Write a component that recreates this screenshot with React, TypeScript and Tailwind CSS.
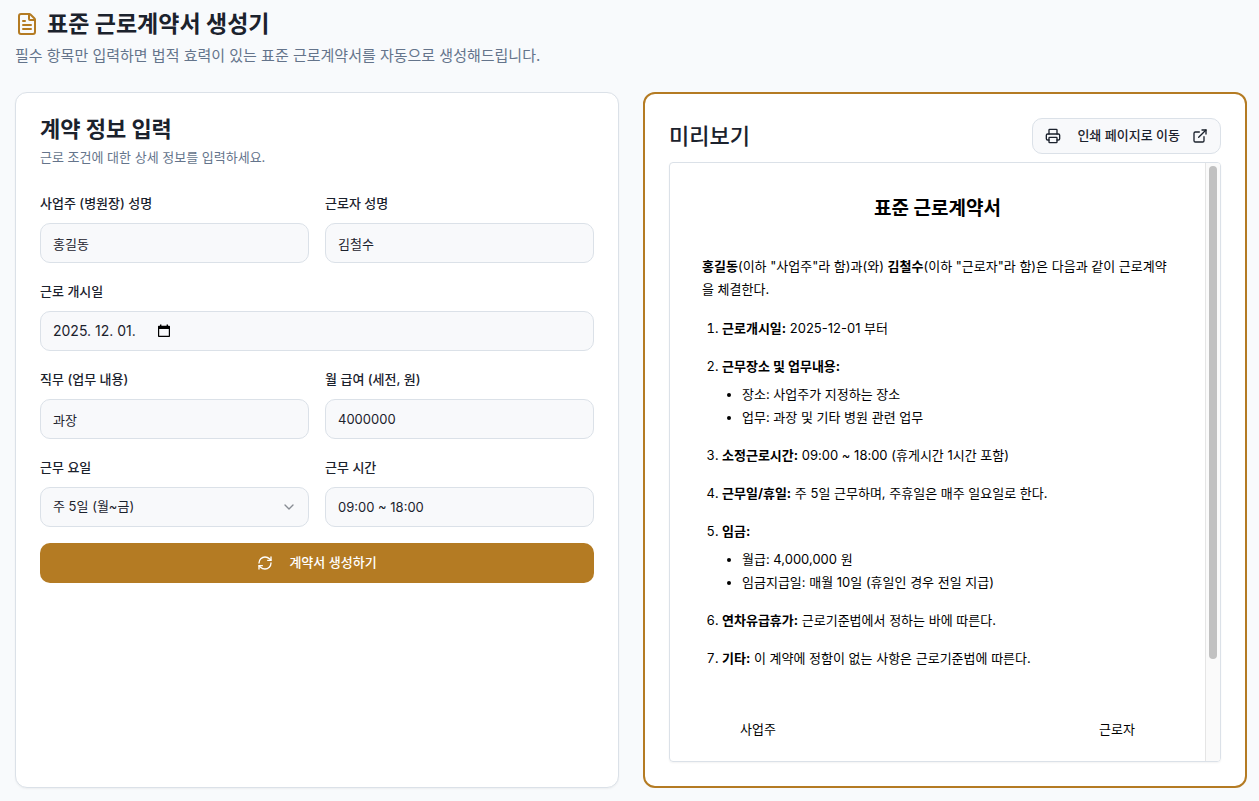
import { useState } from "react"
import type { ReactNode } from "react"
import { ChevronDown, ExternalLink, FileText, Printer, RefreshCw } from "lucide-react"

const inputClass =
    "h-10 w-full rounded-[10px] border border-[#dbe1e8] bg-[#f8f9fb] px-3 text-[#1b222d] outline-none focus:border-[#b47b23]"

const Field = ({ id, label, children }: { id: string; label: string; children: ReactNode }) => (
    <div className="flex flex-col gap-2">
        <label htmlFor={id} className="text-[13px] leading-6 font-medium">{label}</label>
        {children}
    </div>
)

export default function App() {
    const [form, setForm] = useState({
        employer: "홍길동",
        employee: "김철수",
        startDate: "2025. 12. 01.",
        job: "과장",
        salary: "4000000",
        days: "5",
        hours: "09:00 ~ 18:00",
    })

    const update = (key: string, value: string) => setForm({ ...form, [key]: value })

    const isoDate = form.startDate.split(".").map((part) => part.trim()).filter(Boolean).join("-")

    return (
        <div className="min-h-screen bg-[#f8fafc] pt-2 pr-3 pb-3 pl-[15px] font-[Inter,'Noto_Sans_CJK_KR',sans-serif] text-[#1b222d]">
            <header>
                <h1 className="flex items-center gap-2 text-[23px] leading-8 font-bold">
                    <FileText className="size-6 text-[#b47b23]" />
                    표준 근로계약서 생성기
                </h1>
                <p className="mt-1 text-[15px] leading-6 text-[#64748b]">
                    필수 항목만 입력하면 법적 효력이 있는 표준 근로계약서를 자동으로 생성해드립니다.
                </p>
            </header>

            <main className="mt-6 grid gap-6 md:grid-cols-2">
                <section className="rounded-xl border border-[#dbe1e8] bg-white p-6 shadow-xs">
                    <h2 className="text-[22px] leading-6 font-bold">계약 정보 입력</h2>
                    <p className="mt-[6px] text-[13px] leading-5 text-[#64748b]">근로 조건에 대한 상세 정보를 입력하세요.</p>

                    <form className="mt-6 flex flex-col gap-4" onSubmit={(e) => e.preventDefault()}>
                        <div className="grid grid-cols-2 gap-4">
                            <Field id="employer" label="사업주 (병원장) 성명">
                                <input id="employer" className={`${inputClass} text-[13px]`} value={form.employer} onChange={(e) => update("employer", e.target.value)} />
                            </Field>
                            <Field id="employee" label="근로자 성명">
                                <input id="employee" className={`${inputClass} text-[13px]`} value={form.employee} onChange={(e) => update("employee", e.target.value)} />
                            </Field>
                        </div>

                        <Field id="startDate" label="근로 개시일">
                            <div className={`${inputClass} flex items-center gap-3 text-sm`}>
                                <input id="startDate" className="w-[92px] outline-none" value={form.startDate} onChange={(e) => update("startDate", e.target.value)} />
                                <button type="button" aria-label="날짜 선택" className="text-black">
                                    <svg viewBox="0 0 14 14" className="size-[14px]" fill="currentColor">
                                        <path d="M3 0.5h1.4v1.2h5.2V0.5H11v1.2h1.2c.5 0 .8.3.8.8v9.7c0 .5-.3.8-.8.8H1.8c-.5 0-.8-.3-.8-.8V2.500c0-.5.3-.8.8-.8H3zM2.200 5v6.800h9.600V5z" fillRule="evenodd" />
                                    </svg>
                                </button>
                            </div>
                        </Field>

                        <div className="grid grid-cols-2 gap-4">
                            <Field id="job" label="직무 (업무 내용)">
                                <input id="job" className={`${inputClass} text-[13px]`} value={form.job} onChange={(e) => update("job", e.target.value)} />
                            </Field>
                            <Field id="salary" label="월 급여 (세전, 원)">
                                <input id="salary" className={`${inputClass} text-[13px]`} value={form.salary} onChange={(e) => update("salary", e.target.value)} />
                            </Field>
                        </div>

                        <div className="grid grid-cols-2 gap-4">
                            <Field id="days" label="근무 요일">
                                <div className="relative">
                                    <select id="days" className={`${inputClass} appearance-none text-[13px]`} value={form.days} onChange={(e) => update("days", e.target.value)}>
                                        <option value="5">주 5일 (월~금)</option>
                                        <option value="6">주 6일 (월~토)</option>
                                    </select>
                                    <ChevronDown className="pointer-events-none absolute top-3 right-3 size-4 opacity-50" />
                                </div>
                            </Field>
                            <Field id="hours" label="근무 시간">
                                <input id="hours" className={`${inputClass} text-[13px]`} value={form.hours} onChange={(e) => update("hours", e.target.value)} />
                            </Field>
                        </div>

                        <button type="submit" className="flex h-10 items-center justify-center gap-4 rounded-[10px] bg-[#b47b23] text-[13px] font-medium text-white">
                            <RefreshCw className="size-4" />
                            계약서 생성하기
                        </button>
                    </form>
                </section>

                <section className="rounded-xl border-2 border-[#b47b23] bg-white p-6">
                    <div className="flex items-center justify-between">
                        <h2 className="text-[22px] leading-8 font-medium">미리보기</h2>
                        <button type="button" className="flex h-9 items-center gap-3 rounded-[10px] border border-[#dbe1e8] bg-[#f8f9fb] px-3 text-[13px] font-medium">
                            <Printer className="mr-1 size-4" />
                            인쇄 페이지로 이동
                            <ExternalLink className="size-4" />
                        </button>
                    </div>

                    <div className="mt-2 flex h-[600px] overflow-hidden rounded-sm border border-[#dbe1e8] shadow-xs">
                        <article className="flex-1 overflow-y-auto p-8 text-[13px] leading-[23px] text-black [scrollbar-width:none]">
                            <h3 className="mb-8 text-center text-[19px] leading-7 font-bold">표준 근로계약서</h3>
                            <p className="mb-4">
                                <strong>{form.employer}</strong>(이하 "사업주"라 함)과(와) <strong>{form.employee}</strong>(이하 "근로자"라 함)은 다음과 같이 근로계약을 체결한다.
                            </p>
                            <ol className="flex list-decimal flex-col gap-[15px] pl-5">
                                <li><strong>근로개시일:</strong> {isoDate} 부터</li>
                                <li>
                                    <strong>근무장소 및 업무내용:</strong>
                                    <ul className="mt-[5px] list-disc pl-5">
                                        <li>장소: 사업주가 지정하는 장소</li>
                                        <li>업무: {form.job} 및 기타 병원 관련 업무</li>
                                    </ul>
                                </li>
                                <li><strong>소정근로시간:</strong> {form.hours} (휴게시간 1시간 포함)</li>
                                <li><strong>근무일/휴일:</strong> 주 {form.days}일 근무하며, 주휴일은 매주 일요일로 한다.</li>
                                <li>
                                    <strong>임금:</strong>
                                    <ul className="mt-[5px] list-disc pl-5">
                                        <li>월급: {Number(form.salary).toLocaleString("en-US")} 원</li>
                                        <li>임금지급일: 매월 10일 (휴일인 경우 전일 지급)</li>
                                    </ul>
                                </li>
                                <li><strong>연차유급휴가:</strong> 근로기준법에서 정하는 바에 따른다.</li>
                                <li><strong>기타:</strong> 이 계약에 정함이 없는 사항은 근로기준법에 따른다.</li>
                            </ol>
                            <div className="mt-12 flex justify-between text-center">
                                <div className="w-28 border-b border-black pb-20">사업주</div>
                                <div className="w-28 border-b border-black pb-20">근로자</div>
                            </div>
                        </article>
                        <div aria-hidden="true" className="w-[15px] shrink-0 border-l border-[#e5e5e5] bg-[#fafafa] p-[3px]">
                            <div className="h-5/6 w-2 rounded-full bg-[#c1c1c1]" />
                        </div>
                    </div>
                </section>
            </main>
        </div>
    )
}
